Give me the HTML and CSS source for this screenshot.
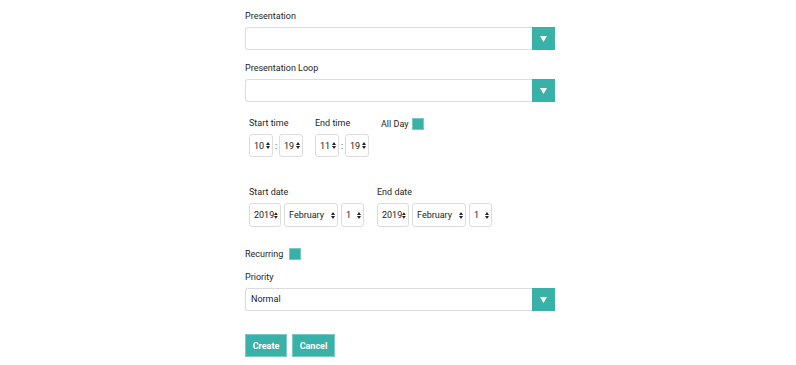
FILE: index.html
```html
<!DOCTYPE html>
<html lang="en">
<head>
    <meta charset="UTF-8">
    <title>New schedule</title>
    <link rel="stylesheet" href="styles.css">
</head>
<body>

    <form class="schedule-form">
        <div class="field">
            <label class="field-label">Presentation</label>
            <div class="dropdown">
                <span class="dropdown-value"></span>
                <span class="dropdown-btn">
                    <svg width="7" height="6" viewBox="0 0 7 6"><path d="M0 0H7L3.5 6Z" fill="#fff"/></svg>
                </span>
            </div>
        </div>

        <div class="field">
            <label class="field-label">Presentation Loop</label>
            <div class="dropdown">
                <span class="dropdown-value"></span>
                <span class="dropdown-btn">
                    <svg width="7" height="6" viewBox="0 0 7 6"><path d="M0 0H7L3.5 6Z" fill="#fff"/></svg>
                </span>
            </div>
        </div>

        <div class="time-row">
            <div class="time-group">
                <label class="field-label">Start time</label>
                <div class="picker">
                    <div class="mini-select w-24"><span>10</span><svg class="updown" width="4" height="7" viewBox="0 0 4 7"><path d="M0 3H4L2 0Z M0 4H4L2 7Z" fill="#222"/></svg></div>
                    <span class="colon">:</span>
                    <div class="mini-select w-24"><span>19</span><svg class="updown" width="4" height="7" viewBox="0 0 4 7"><path d="M0 3H4L2 0Z M0 4H4L2 7Z" fill="#222"/></svg></div>
                </div>
            </div>
            <div class="time-group">
                <label class="field-label">End time</label>
                <div class="picker">
                    <div class="mini-select w-24"><span>11</span><svg class="updown" width="4" height="7" viewBox="0 0 4 7"><path d="M0 3H4L2 0Z M0 4H4L2 7Z" fill="#222"/></svg></div>
                    <span class="colon">:</span>
                    <div class="mini-select w-24"><span>19</span><svg class="updown" width="4" height="7" viewBox="0 0 4 7"><path d="M0 3H4L2 0Z M0 4H4L2 7Z" fill="#222"/></svg></div>
                </div>
            </div>
            <div class="allday">
                <span class="field-label">All Day</span>
                <span class="check"></span>
            </div>
        </div>

        <div class="date-row">
            <div class="date-group">
                <label class="field-label">Start date</label>
                <div class="picker">
                    <div class="mini-select w-32"><span>2019</span><svg class="updown" width="4" height="7" viewBox="0 0 4 7"><path d="M0 3H4L2 0Z M0 4H4L2 7Z" fill="#222"/></svg></div>
                    <div class="mini-select w-54"><span>February</span><svg class="updown" width="4" height="7" viewBox="0 0 4 7"><path d="M0 3H4L2 0Z M0 4H4L2 7Z" fill="#222"/></svg></div>
                    <div class="mini-select w-23"><span>1</span><svg class="updown" width="4" height="7" viewBox="0 0 4 7"><path d="M0 3H4L2 0Z M0 4H4L2 7Z" fill="#222"/></svg></div>
                </div>
            </div>
            <div class="date-group">
                <label class="field-label">End date</label>
                <div class="picker">
                    <div class="mini-select w-32"><span>2019</span><svg class="updown" width="4" height="7" viewBox="0 0 4 7"><path d="M0 3H4L2 0Z M0 4H4L2 7Z" fill="#222"/></svg></div>
                    <div class="mini-select w-54"><span>February</span><svg class="updown" width="4" height="7" viewBox="0 0 4 7"><path d="M0 3H4L2 0Z M0 4H4L2 7Z" fill="#222"/></svg></div>
                    <div class="mini-select w-23"><span>1</span><svg class="updown" width="4" height="7" viewBox="0 0 4 7"><path d="M0 3H4L2 0Z M0 4H4L2 7Z" fill="#222"/></svg></div>
                </div>
            </div>
        </div>

        <div class="recurring">
            <span class="field-label">Recurring</span>
            <span class="check"></span>
        </div>

        <div class="field">
            <label class="field-label">Priority</label>
            <div class="dropdown">
                <span class="dropdown-value">Normal</span>
                <span class="dropdown-btn">
                    <svg width="7" height="6" viewBox="0 0 7 6"><path d="M0 0H7L3.5 6Z" fill="#fff"/></svg>
                </span>
            </div>
        </div>

        <div class="actions">
            <button type="button" class="btn btn-create">Create</button>
            <button type="button" class="btn btn-cancel">Cancel</button>
        </div>
    </form>

</body>
</html>
```

FILE: styles.css
```css
body {
    font-family: Roboto, "Liberation Sans", sans-serif;
    background-color: #fff;
    color: #222;
    margin: 0;
    padding: 0;
}

.schedule-form {
    width: 310px;
    margin-left: 245px;
    padding-top: 10px;
}

.field-label {
    display: block;
    font-size: 9px;
    line-height: 12px;
    height: 12px;
    color: #1e1e1e;
}

.field {
    margin-bottom: 12px;
}

.field .field-label {
    margin-bottom: 5px;
}

/* Dropdown with teal button */
.dropdown {
    display: flex;
    height: 23px;
    border: 1px solid #dcdcdc;
    border-right: none;
    border-radius: 3px 0 0 3px;
    box-sizing: border-box;
}

.dropdown-value {
    flex: 1;
    font-size: 9px;
    line-height: 21px;
    padding-left: 5px;
}

.dropdown-btn {
    width: 23px;
    margin: -1px 0;
    background-color: #38b1a9;
    display: flex;
    align-items: center;
    justify-content: center;
}

/* Time row */
.time-row {
    display: flex;
    padding-left: 4px;
    margin-top: 15px;
}

.time-group {
    margin-right: 12px;
}

.time-group .field-label,
.date-group .field-label {
    margin-bottom: 5px;
}

.picker {
    display: flex;
    align-items: center;
    gap: 3px;
}

.time-group .picker {
    gap: 1px;
}

.colon {
    font-size: 9px;
    width: 4px;
    text-align: center;
}

.mini-select {
    height: 23px;
    box-sizing: border-box;
    border: 1px solid #dcdcdc;
    border-radius: 3px;
    display: flex;
    align-items: center;
    justify-content: space-between;
    padding: 0 2px 0 4px;
    font-size: 9px;
    white-space: nowrap;
}

.w-24 { width: 24px; }
.w-32 { width: 32px; }
.w-54 { width: 54px; }
.w-23 { width: 23px; }

.allday {
    display: flex;
    align-items: center;
    gap: 4px;
    height: 12px;
    margin-top: 1px;
}

.check {
    display: inline-block;
    width: 12px;
    height: 12px;
    box-sizing: border-box;
    background-color: #38b1a9;
    border: 1px solid #7cc9c3;
}

/* Date row */
.date-row {
    display: flex;
    padding-left: 4px;
    margin-top: 29px;
    gap: 13px;
}

.date-group .mini-select {
    height: 24px;
}

.recurring {
    display: flex;
    align-items: center;
    gap: 6px;
    margin-top: 21px;
    margin-bottom: 11px;
}

.actions {
    display: flex;
    gap: 5px;
    margin-top: 23px;
}

.btn {
    height: 23px;
    border: 1px solid #7cc9c3;
    background-color: #38b1a9;
    color: #fff;
    font-family: Roboto, "Liberation Sans", sans-serif;
    font-weight: bold;
    font-size: 9px;
    padding: 0;
    cursor: pointer;
}

.btn-create { width: 42px; }
.btn-cancel { width: 43px; }
```
